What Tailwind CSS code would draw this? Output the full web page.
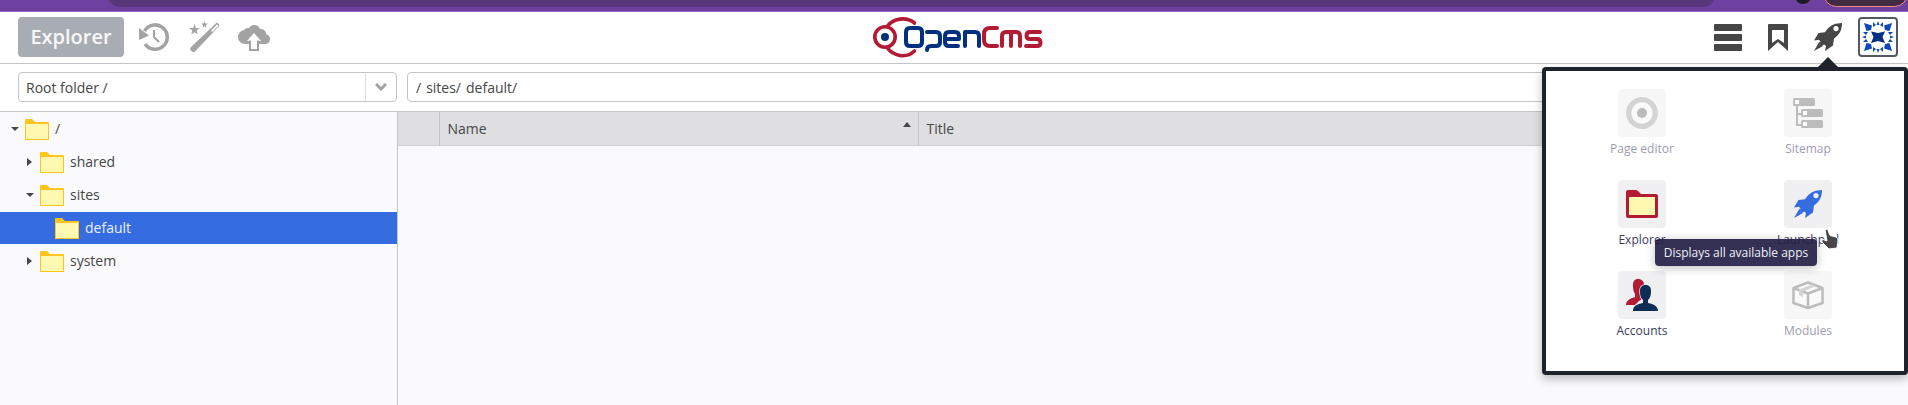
<!DOCTYPE html>
<html lang="en">
<head>
<meta charset="utf-8">
<title>OpenCms Explorer</title>
<script src="https://cdn.jsdelivr.net/npm/@tailwindcss/browser@4"></script>
</head>
<body class="min-h-screen flex flex-col overflow-hidden bg-white font-['Open_Sans',sans-serif] text-sm text-[#464646]">

<svg class="hidden" aria-hidden="true">
  <symbol id="folder" viewBox="0 0 24 21">
    <path fill="#ffc51e" d="M0 1Q0 0 1 0h6l3 3h13q1 0 1 1v17H0z"/>
    <path fill="#fff8b0" d="M1 5h22v15H1z"/>
  </symbol>
  <symbol id="rocket" viewBox="0 0 28 28">
    <path fill="currentColor" fill-rule="evenodd" d="M28 0c-6 .2-11 1.500-15 6.500L11 9.200 4.500 10 0 17.500l5-.8 1.500 1.800-1 2L8 23l2-1.500L12 23l-1 5 8-5.500 1-7C25.500 11.500 28 7 28 0zM22 3a2.600 2.600 0 1 1 0 5.200A2.600 2.600 0 0 1 22 3z"/>
    <path fill="currentColor" d="M5.500 18.500L0 28l9-5-2.500-1.500z"/>
  </symbol>
</svg>

<!-- Browser chrome strip -->
<div class="flex h-3 shrink-0 items-start overflow-hidden border-b border-[#9462c4] bg-[#6e40a0] pl-[107px]" aria-hidden="true">
  <div class="-mt-5 h-[27px] grow rounded-full bg-[#57377a]"></div>
  <div class="-mt-3 ml-[79px] size-4 rounded-full bg-[#1d1d1d]"></div>
  <div class="-mt-5 ml-3 h-[27px] w-[85px] rounded-full border border-[#f28b82] bg-[#412b43]"></div>
</div>

<header class="grid h-[52px] shrink-0 grid-cols-[1fr_auto_1fr] items-center border-b border-[#c5c5c7] pb-px pl-[18px] pr-[10px]">
  <div class="flex items-center">
    <button class="h-10 w-[106px] rounded bg-[#a8adb4] text-xl font-semibold text-[#f7f7f8]">Explorer</button>
    <button class="ml-[15px] size-[30px] text-[#a3a3a3]" aria-label="History">
      <svg viewBox="0 0 30 30" class="size-[30px]"><path fill="none" stroke="currentColor" stroke-width="3.500" d="M5.500 9A12.200 12.200 0 1 1 6 22"/><path fill="currentColor" d="M0 6v12l10-4.500z"/><path fill="none" stroke="currentColor" stroke-width="2" d="M15 8v7l5 5"/></svg>
    </button>
    <button class="ml-[20px] size-[32px] text-[#a3a3a3]" aria-label="Publish wizard">
      <svg viewBox="0 0 32 32" class="size-[32px]"><path fill="currentColor" fill-rule="evenodd" d="M27 2.200q1-.9 2 0l1 1q.9 1 0 2L6 30.500q-1.500 1.300-3 0l-1.500-1.500q-1-1.200.3-2.700zM28 3.500l-6 6 1.500 1.500 6-6.500z"/><path fill="currentColor" d="M5.500 3l1.300 4 4.200.1-3.400 2.500 1.200 4-3.300-2.400-3.300 2.400 1.200-4L0 7.100 4.200 7zM15.500 0l.9 2.500 2.600.1-2.100 1.600.7 2.500-2.100-1.500-2.100 1.500.7-2.500L12 2.600l2.600-.1z"/></svg>
    </button>
    <button class="ml-4 h-[32px] w-[34px] text-[#a3a3a3]" aria-label="Upload">
      <svg viewBox="0 0 34 32" class="h-[32px] w-[34px]"><path fill="currentColor" d="M8 23a7 7 0 0 1-7-7c0-3 2-6 6-7a5 5 0 0 1 5-2c1-2 3-3 5-3 3 0 5 1 6 4 4 0 6 2 6 5 3 1 4 3 4 5 0 3-2 5-5 5z"/><path fill="#fff" d="M17 12l7 8h-2v3H12v-3h-2z"/><path fill="#fff" stroke="currentColor" stroke-width="2" d="M13 19.500V29h8v-9.500"/></svg>
    </button>
  </div>

  <a href="#" aria-label="OpenCms" class="block">
    <svg viewBox="0 0 172 44" class="h-[44px] w-[172px]" fill="none" stroke-linecap="round" stroke-linejoin="round">
      <g stroke="#b31b34" stroke-width="3.600"><circle cx="13" cy="22" r="10.200"/><path d="M15 11.500C21 3.500 34 1 42.500 8M15 32.500C21 41 34 44 42.500 36"/></g>
      <circle cx="13" cy="22" r="4" fill="#00307f"/>
      <g stroke="#00307f" stroke-width="4"><path d="M38 13h8q4 0 4 4v10q0 4-4 4h-8q-4 0-4-4V17q0-4 4-4z"/><path d="M55 17h9q4 0 4 4v6q0 4-4 4h-5q-4 0-4 4"/><path d="M75 24h12v-3q0-4-4-4h-6q-4 0-4 4v6q0 4 4 4h9"/><path d="M93 31V17h10q4 0 4 4v10"/></g>
      <g stroke="#b31b34" stroke-width="4"><path d="M125 13h-7q-6 0-6 6v6q0 6 6 6h7"/><path d="M130 31V21q0-4 4-4h10q4 0 4 4v10M139 18v13"/><path d="M168 17h-10q-3.500 0-3.500 3.500T158 24h7q3.500 0 3.500 3.500T165 31h-11"/></g>
    </svg>
  </a>

  <nav class="flex items-center justify-end">
    <button class="flex w-7 flex-col gap-[3px]" aria-label="Menu">
      <span class="h-[7px] w-full rounded-[1px] bg-[#464646]"></span><span class="h-[7px] w-full rounded-[1px] bg-[#464646]"></span><span class="h-[7px] w-full rounded-[1px] bg-[#464646]"></span>
    </button>
    <button class="ml-[26px]" aria-label="Bookmarks"><svg viewBox="0 0 20 27" class="h-[27px] w-5"><path fill="#464646" fill-rule="evenodd" d="M0 1q0-1 1-1h18q1 0 1 1v26L10 18 0 27zM4 6v13l6-4 6 4V6z"/></svg></button>
    <button class="ml-[26px]" aria-label="App launcher"><svg class="size-7 text-[#464646]"><use href="#rocket"/></svg></button>
    <button class="ml-4 flex size-10 items-center justify-center rounded border-2 border-[#54585f]" aria-label="User">
      <svg viewBox="0 0 32 32" class="size-8"><g fill="#0d47b8"><g id="q"><path d="M2 2l8 2.500-1 4.500-4.500 1zM11 1l3 3-3 2zM14.500 4L16 0l1.500 4zM21 1v5l-3-2z"/></g><use href="#q" transform="rotate(90 16 16)"/><use href="#q" transform="rotate(180 16 16)"/><use href="#q" transform="rotate(270 16 16)"/></g><path fill="#00307f" d="M9 10.500l7 1.500 7-1.500L20.500 16l2.500 6-7-2-7 2 2.500-6z"/></svg>
    </button>
  </nav>
</header>

<div class="flex h-12 shrink-0 items-center border-b border-[#c5c5c7] px-[18px] pb-px">
  <div class="relative w-[379px] shrink-0">
    <select aria-label="Site" class="h-[30px] w-full appearance-none rounded border border-[#c5c5c7] bg-white pl-[7px] pt-px"><option>Root folder /</option></select>
    <span class="pointer-events-none absolute inset-y-px right-px flex w-[31px] items-center justify-center border-l border-[#dcdcde]"><svg viewBox="0 0 12 8" class="h-2 w-3"><path fill="none" stroke="#a3a3a3" stroke-width="3" d="M1 1l5 5 5-5"/></svg></span>
  </div>
  <nav aria-label="Path" class="ml-[10px] flex h-[30px] min-w-0 grow items-center gap-[5px] rounded border border-[#c5c5c7] px-2 pt-0.5"><a href="#">/</a><a href="#">sites/</a><a href="#">default/</a></nav>
</div>

<main class="flex grow bg-[#fafafc]">
  <ul class="w-[398px] shrink-0 border-r border-[#c5c5c7] pt-px" aria-label="Folders">
    <li class="mb-px flex h-8 items-center pl-[11px]"><svg viewBox="0 0 8 4" class="mr-[6px] h-1 w-2"><path fill="#464646" d="M0 0h8L4 4z"/></svg><svg class="mr-[6px] h-[21px] w-6"><use href="#folder"/></svg>/</li>
    <li class="mb-px flex h-8 items-center pl-[27px]"><svg viewBox="0 0 5 8" class="mr-2 h-2 w-[5px]"><path fill="#464646" d="M0 0l5 4-5 4z"/></svg><svg class="mr-[6px] h-[21px] w-6"><use href="#folder"/></svg>shared</li>
    <li class="mb-px flex h-8 items-center pl-[26px]"><svg viewBox="0 0 8 4" class="mr-[6px] h-1 w-2"><path fill="#464646" d="M0 0h8L4 4z"/></svg><svg class="mr-[6px] h-[21px] w-6"><use href="#folder"/></svg>sites</li>
    <li class="mb-px flex h-8 items-center bg-[#356de1] pl-[55px] text-[#e9eefb]"><svg class="mr-[6px] h-[21px] w-6"><use href="#folder"/></svg>default</li>
    <li class="mb-px flex h-8 items-center pl-[27px]"><svg viewBox="0 0 5 8" class="mr-2 h-2 w-[5px]"><path fill="#464646" d="M0 0l5 4-5 4z"/></svg><svg class="mr-[6px] h-[21px] w-6"><use href="#folder"/></svg>system</li>
  </ul>
  <div class="grow">
    <table class="w-full table-fixed border-collapse text-left">
      <thead><tr class="h-[33px] border-b border-[#d0d0d2] bg-[#dfdfe1]">
        <th class="w-[41px] border-r border-[#c5c5c7]" aria-label="Type"></th>
        <th class="w-[479px] border-r border-[#c5c5c7] pl-2 pr-[7px] pt-0.5 font-normal"><div class="flex items-center justify-between">Name<svg viewBox="0 0 8 5" class="mb-2.5 h-[5px] w-2"><path fill="#464646" d="M0 5h8L4 0z"/></svg></div></th>
        <th class="pl-2 pt-0.5 font-normal">Title</th>
      </tr></thead>
    </table>
  </div>
</main>

<!-- App launcher popup -->
<section class="absolute right-0 top-[67px] w-[366px] rounded border-4 border-[#1f242c] bg-white pb-[30px] pt-[18px] text-xs text-[#3c3a60] shadow-[0_4px_10px_rgba(0,0,0,0.25)]" aria-label="Apps">
  <svg viewBox="0 0 20 10" class="absolute -top-[14px] right-[66px] h-[10px] w-5"><path fill="#1f242c" d="M10 0l10 10H0z"/></svg>
  <div class="grid grid-cols-[166px_166px] justify-center gap-y-[21px]">
    <button disabled class="flex flex-col items-center gap-0.5 text-[#9d9cb0]">
      <span class="flex size-12 items-center justify-center rounded bg-[#f7f7f7]"><svg viewBox="0 0 32 32" class="size-8"><circle cx="16" cy="16" r="13.300" fill="#fafafa" stroke="#d4d4d4" stroke-width="5.300"/><circle cx="16" cy="16" r="5" fill="#bcbcbc"/></svg></span>
      <span class="leading-5">Page editor</span>
    </button>
    <button disabled class="flex flex-col items-center gap-0.5 text-[#9d9cb0]">
      <span class="flex size-12 items-center justify-center rounded bg-[#f7f7f7]"><svg viewBox="0 0 32 32" class="size-8"><path fill="none" stroke="#bcbcbc" stroke-width="2" d="M5 8v20h5M5 17h5"/><g fill="#bcbcbc"><rect x="1" y="1" width="22" height="8" rx="1.500"/><rect x="9" y="12" width="22" height="8" rx="1.500"/><rect x="9" y="23" width="22" height="8" rx="1.500"/></g><path fill="#fff" d="M3 3h4v4H3zM11 14h4v4h-4zM11 25h4v4h-4z"/></svg></span>
      <span class="leading-5">Sitemap</span>
    </button>
    <button class="flex flex-col items-center gap-0.5">
      <span class="flex size-12 items-center justify-center rounded bg-[#f0f0f2]"><svg viewBox="0 0 32 28" class="h-7 w-8"><path fill="#b31b34" d="M0 2q0-2 2-2h8q1 0 2 1l3 3h15q2 0 2 2v20q0 2-2 2H2q-2 0-2-2z"/><path fill="#fff8b0" d="M3 7h26v18H3z"/></svg></span>
      <span class="leading-5">Explorer</span>
    </button>
    <button class="relative flex flex-col items-center gap-0.5">
      <span class="flex size-12 items-center justify-center rounded bg-[#f0f0f2]"><svg class="size-7 text-[#356de1]"><use href="#rocket"/></svg></span>
      <span class="leading-5">Launchpad</span>
      <svg viewBox="0 0 20 22" class="absolute left-[94px] top-[48px] z-20 h-[22px] w-5"><path fill="#464646" stroke="#fff" stroke-width="1" d="M6 1.500q2-1 3 1l2 5 6 1.500q2 1 2 3l-1 8-8 1-7-7q-1-2 1-2.500l4 1.500z"/></svg>
    </button>
    <button class="flex flex-col items-center gap-0.5">
      <span class="flex size-12 items-center justify-center rounded bg-[#f0f0f2]"><svg viewBox="0 0 32 32" class="size-8"><path fill="#b31b34" d="M12 0c4 0 6 2.500 6 6-3 2-4 5-4 8 0 2 1 4 2 6l-3 2-4 4H0c0-4 3-6 9-8v-3c-2-3-2-6-2-9 0-4 2-6 5-6z"/><path fill="#0d2c56" stroke="#f0f0f2" stroke-width="1.500" paint-order="stroke" d="M19.500 6c4 0 5.500 2.500 5.500 6 0 4-.5 7-3 9v3c6 1 10 3.500 10 8H7c0-5 4-7 10-8v-3c-2.500-2-3-5-3-9 0-3.500 1.500-6 5.500-6z"/></svg></span>
      <span class="leading-5">Accounts</span>
    </button>
    <button disabled class="flex flex-col items-center gap-0.5 text-[#9d9cb0]">
      <span class="flex size-12 items-center justify-center rounded bg-[#f7f7f7]"><svg viewBox="0 0 32 32" class="size-8"><path fill="#fafafa" stroke="#bcbcbc" stroke-width="2.500" stroke-linejoin="round" d="M16 3.500L1.500 9v15L16 29l14.500-5V9zM1.500 9L16 14.500 30.500 9M16 14.500V29"/><path fill="#d4d4d4" d="M7 10.500L20 5.500l4 1.500-13 5.500V18l-4-2z"/></svg></span>
      <span class="leading-5">Modules</span>
    </button>
  </div>
  <div role="tooltip" class="absolute left-[109px] top-[168px] z-10 flex h-[27px] w-[162px] items-center justify-center whitespace-nowrap rounded-sm bg-[#232046]/92 text-[#f0f0f5] shadow-[0_2px_10px_rgba(0,0,0,0.25)]">Displays all available apps</div>
</section>
</body>
</html>
